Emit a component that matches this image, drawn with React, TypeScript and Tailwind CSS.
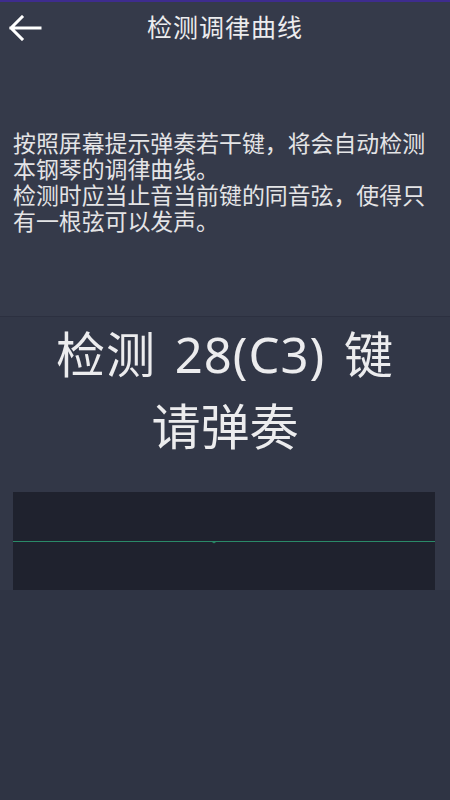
const cjk = { fontFamily: '"Noto Sans CJK SC", "Noto Sans", sans-serif' };

const BackArrow = () => (
  <svg width="34" height="26" viewBox="0 0 34 26" fill="none">
    <path
      d="M32 13H3M14 2L3 13l11 11"
      stroke="#ffffff"
      strokeWidth="3"
      strokeLinecap="square"
    />
  </svg>
);

export default function App() {
  return (
    <div className="flex min-h-[800px] w-full flex-col bg-[#2f3444] text-[#e8e8ea]" style={cjk}>
      {/* top strip */}
      <div className="h-[2px] bg-[#3e2c8e]" />

      {/* header + intro */}
      <div className="bg-[#353a4a]">
        <div className="relative flex h-[48px] items-center justify-center">
          <button className="absolute left-[8px] top-[13px]">
            <BackArrow />
          </button>
          <h1 className="text-[25px] leading-none tracking-[1px] text-[#ececee]">检测调律曲线</h1>
        </div>
        <div className="px-[13px] pt-[79px] pb-[83px] text-[22.9px] leading-[26px] text-[#e4e4e6]">
          <p>按照屏幕提示弹奏若干键，将会自动检测本钢琴的调律曲线。</p>
          <p>检测时应当止音当前键的同音弦，使得只有一根弦可以发声。</p>
        </div>
      </div>

      {/* prompt */}
      <div className="border-t border-[#2c3040] bg-[#323747]">
        <div className="flex flex-col items-center pt-[1px] pb-[32px] text-[#ececee]">
          <div
            className="text-[49px] leading-[73px] tracking-[1px] [word-spacing:5px]"
            style={{ fontFamily: '"Noto Sans", "Noto Sans CJK SC", sans-serif' }}
          >
            检测 28(C3) 键
          </div>
          <div className="-mt-[4px] text-[49px] leading-[73px]">请弹奏</div>
        </div>

        {/* waveform */}
        <div className="pl-[13px] pr-[15px]">
          <div className="h-[98px] bg-[#1f222e] pt-[48px]">
            <svg width="100%" height="4" className="block">
              <line x1="0" y1="1.5" x2="100%" y2="1.5" stroke="#2a8a68" strokeWidth="1" />
              <polyline points="199,1.5 201,3 203,1.5" stroke="#2a8a68" strokeWidth="1" fill="none" />
            </svg>
          </div>
        </div>
      </div>

      <div className="flex-1 bg-[#2f3444]" />
    </div>
  );
}
